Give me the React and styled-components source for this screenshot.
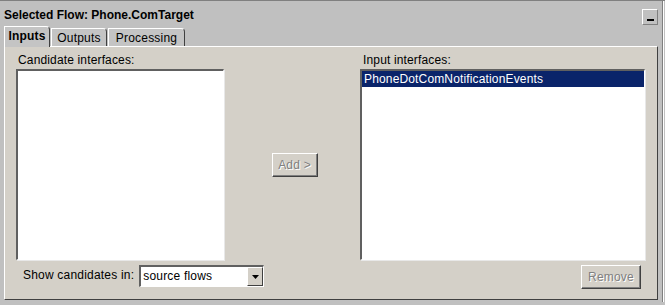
import React from 'react'
import styled, { createGlobalStyle } from 'styled-components'

const GlobalStyle = createGlobalStyle`
    html, body {
        margin: 0;
        padding: 0;
        background: #c0c0c0;
    }
    body {
        font-family: "Liberation Sans", Arial, sans-serif;
        font-size: 12px;
        color: #000;
    }
`

const Frame = styled.div`
    width: 665px;
    height: 305px;
    box-sizing: border-box;
    background: #c0c0c0;
    border-top: 1px solid #808080;
    padding: 1px 4px 0 4px;
    position: relative;
    &::after {
        content: '';
        position: absolute;
        top: 0;
        right: 2px;
        bottom: 3px;
        width: 1px;
        background: #808080;
        box-shadow: 1px 0 0 #fff;
    }
`

const TitleBar = styled.div`
    display: flex;
    align-items: center;
    justify-content: space-between;
    height: 23px;
    padding-right: 3px;
`

const Title = styled.div`
    font-weight: bold;
    font-size: 12px;
    margin-top: 3px;
`

const MinButton = styled.div`
    width: 16px;
    height: 16px;
    box-sizing: border-box;
    border-top: 1px solid #fff;
    border-left: 1px solid #fff;
    border-right: 1px solid #808080;
    border-bottom: 1px solid #808080;
    display: flex;
    align-items: flex-end;
    justify-content: center;
    padding-bottom: 3px;
    margin-top: 7px;
    &::before {
        content: '';
        width: 7px;
        height: 2px;
        background: #000;
    }
`

const TabRow = styled.div`
    display: flex;
    align-items: flex-end;
    height: 21px;
    position: relative;
    z-index: 1;
`

const Tab = styled.div`
    box-sizing: border-box;
    width: ${p => p.$w}px;
    height: ${p => (p.$active ? '21px' : '18px')};
    margin-bottom: ${p => (p.$active ? '-1px' : '0')};
    display: flex;
    align-items: center;
    justify-content: center;
    background: #c4c4c4;
    border-left: 1px solid #fff;
    border-top: 1px solid #fff;
    border-right: 1px solid #404040;
    border-top-right-radius: 4px;
    font-weight: ${p => (p.$active ? 'bold' : 'normal')};
    font-size: 12px;
    letter-spacing: 0.2px;
    margin-right: 1px;
    ${p => p.$active && 'padding-bottom: 2px;'}
`

const Panel = styled.div`
    box-sizing: border-box;
    width: 654px;
    height: 254px;
    background: #d4d0c8;
    border-top: 1px solid #fff;
    border-left: 1px solid #fff;
    border-right: 1px solid #404040;
    border-bottom: 1px solid #404040;
    padding: 6px 12px 0 11px;
    display: grid;
    grid-template-columns: 208px 1fr 285px;
    grid-template-rows: 16px 191px 1fr;
`

const Label = styled.div`
    padding-left: ${p => p.$indent || 0}px;
    line-height: 14px;
    letter-spacing: 0.15px;
`

const ListBox = styled.div`
    box-sizing: border-box;
    background: #fff;
    border-top: 2px solid #606060;
    border-left: 2px solid #606060;
    border-right: 1px solid #fff;
    border-bottom: 1px solid #fff;
    box-shadow: 1px 1px 0 #e8e8e8;
`

const ListItem = styled.div`
    height: 16px;
    line-height: 16px;
    padding-left: 2px;
    background: ${p => (p.$selected ? '#0a246a' : 'transparent')};
    color: ${p => (p.$selected ? '#fff' : '#000')};
    font-size: 12px;
    letter-spacing: 0.15px;
`

const Middle = styled.div`
    display: flex;
    align-items: center;
    justify-content: center;
    padding-left: 5px;
`

const Button = styled.div`
    box-sizing: border-box;
    width: ${p => p.$w}px;
    height: 24px;
    display: flex;
    align-items: center;
    justify-content: center;
    background: #d4d0c8;
    border-top: 1px solid #fff;
    border-left: 1px solid #fff;
    border-right: 1px solid #404040;
    border-bottom: 1px solid #404040;
    box-shadow: inset -1px -1px 0 #808080;
    color: ${p => (p.disabled ? '#808080' : '#000')};
    text-shadow: ${p => (p.disabled ? '1px 1px 0 #fff' : 'none')};
    font-size: 12px;
    letter-spacing: 0.2px;
`

const BottomLeft = styled.div`
    grid-column: 1 / 3;
    display: flex;
    align-items: flex-start;
    padding-top: 5px;
    padding-left: 7px;
    gap: 5px;
`

const BottomRight = styled.div`
    display: flex;
    justify-content: flex-end;
    align-items: flex-start;
    padding-top: 5px;
    padding-right: 4px;
`

const ComboLabel = styled.div`
    line-height: 21px;
    font-size: 12px;
    letter-spacing: 0.2px;
`

const Combo = styled.div`
    box-sizing: border-box;
    width: 125px;
    height: 22px;
    display: flex;
    background: #fff;
    border-top: 2px solid #606060;
    border-left: 2px solid #606060;
    border-right: 1px solid #fff;
    border-bottom: 1px solid #fff;
`

const ComboText = styled.div`
    flex: 1;
    padding-left: 2px;
    line-height: 18px;
    font-size: 12px;
    letter-spacing: 0.2px;
`

const ComboArrow = styled.div`
    box-sizing: border-box;
    width: 16px;
    height: 19px;
    background: #d4d0c8;
    border-top: 1px solid #fff;
    border-left: 1px solid #fff;
    border-right: 1px solid #404040;
    border-bottom: 1px solid #404040;
    display: flex;
    align-items: center;
    justify-content: center;
`

export default function App() {
    return (
        <>
            <GlobalStyle />
            <Frame>
                <TitleBar>
                    <Title>Selected Flow: Phone.ComTarget</Title>
                    <MinButton />
                </TitleBar>
                <TabRow>
                    <Tab $active $w={46}>Inputs</Tab>
                    <Tab $w={56}>Outputs</Tab>
                    <Tab $w={77}>Processing</Tab>
                </TabRow>
                <Panel>
                    <Label $indent={2}>Candidate interfaces:</Label>
                    <div />
                    <Label $indent={3}>Input interfaces:</Label>
                    <ListBox />
                    <Middle>
                        <Button disabled $w={46}>Add &gt;</Button>
                    </Middle>
                    <ListBox>
                        <ListItem $selected>PhoneDotComNotificationEvents</ListItem>
                    </ListBox>
                    <BottomLeft>
                        <ComboLabel>Show candidates in:</ComboLabel>
                        <Combo>
                            <ComboText>source flows</ComboText>
                            <ComboArrow>
                                <svg width="7" height="4" viewBox="0 0 7 4">
                                    <polygon points="0,0 7,0 3.5,4" fill="#000" />
                                </svg>
                            </ComboArrow>
                        </Combo>
                    </BottomLeft>
                    <BottomRight>
                        <Button disabled $w={60}>Remove</Button>
                    </BottomRight>
                </Panel>
            </Frame>
        </>
    )
}
